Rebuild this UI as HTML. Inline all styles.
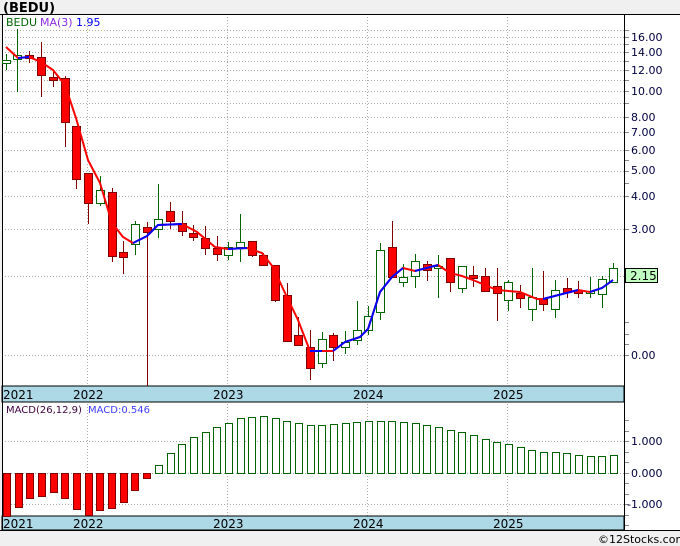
<!DOCTYPE html>
<html><head><meta charset="utf-8"><style>
html,body{margin:0;padding:0;background:#f0f0f0;}
svg{display:block;font-family:"DejaVu Sans","Liberation Sans",sans-serif;}
</style></head><body>
<svg width="680" height="546" viewBox="0 0 680 546" xmlns="http://www.w3.org/2000/svg">
<rect x="0" y="0" width="680" height="546" fill="#f0f0f0"/>
<rect x="2" y="14" width="678" height="516" fill="#fff"/>
<text x="3" y="12" font-size="13" font-weight="bold" fill="#000">(BEDU)</text>
<g stroke="#aaa" stroke-dasharray="1,2" stroke-width="1">
<line x1="2" x2="624" y1="30.5" y2="30.5"/><line x1="2" x2="624" y1="37.5" y2="37.5"/><line x1="2" x2="624" y1="44.5" y2="44.5"/><line x1="2" x2="624" y1="52.5" y2="52.5"/><line x1="2" x2="624" y1="61.5" y2="61.5"/><line x1="2" x2="624" y1="70.5" y2="70.5"/><line x1="2" x2="624" y1="80.5" y2="80.5"/><line x1="2" x2="624" y1="91.5" y2="91.5"/><line x1="2" x2="624" y1="103.5" y2="103.5"/><line x1="2" x2="624" y1="117.5" y2="117.5"/><line x1="2" x2="624" y1="132.5" y2="132.5"/><line x1="2" x2="624" y1="150.5" y2="150.5"/><line x1="2" x2="624" y1="171.5" y2="171.5"/><line x1="2" x2="624" y1="196.5" y2="196.5"/><line x1="2" x2="624" y1="229.5" y2="229.5"/><line x1="2" x2="624" y1="276.5" y2="276.5"/><line x1="2" x2="624" y1="355.5" y2="355.5"/>
<line x1="2" x2="624" y1="441.5" y2="441.5"/><line x1="2" x2="624" y1="473.5" y2="473.5"/><line x1="2" x2="624" y1="504.5" y2="504.5"/>
<line x1="87.5" x2="87.5" y1="14" y2="516"/><line x1="227.5" x2="227.5" y1="14" y2="516"/><line x1="367.5" x2="367.5" y1="14" y2="516"/><line x1="507.5" x2="507.5" y1="14" y2="516"/>
</g>
<rect x="2" y="386" width="622" height="16" fill="#add8e6" stroke="#000"/>
<rect x="2" y="516" width="622" height="14" fill="#add8e6" stroke="#000"/>
<g font-size="12" fill="#000">
<text x="3" y="399">2021</text><text x="73" y="399">2022</text><text x="213" y="399">2023</text><text x="353" y="399">2024</text><text x="493" y="399">2025</text>
<text x="3" y="528">2021</text><text x="73" y="528">2022</text><text x="213" y="528">2023</text><text x="353" y="528">2024</text><text x="493" y="528">2025</text>
</g>
<line x1="2.5" y1="14" x2="2.5" y2="530" stroke="#000"/>
<line x1="0" y1="14.5" x2="680" y2="14.5" stroke="#000"/>
<line x1="624.5" y1="14" x2="624.5" y2="530" stroke="#000"/>
<line x1="0" y1="530.5" x2="680" y2="530.5" stroke="#000"/>
<text x="6" y="26" font-size="11" fill="#006400">BEDU</text>
<text x="40" y="26" font-size="11" fill="#8a2be2">MA(3)</text>
<text x="76" y="26" font-size="11" fill="#0000ff">1.95</text>
<text x="6" y="413" font-size="10" fill="#400040">MACD(26,12,9)</text>
<text x="88" y="413" font-size="10" fill="#4040ff">MACD:0.546</text>
<g stroke="#888"><line x1="625" x2="629" y1="30.5" y2="30.5"/><line x1="625" x2="629" y1="37.5" y2="37.5"/><line x1="625" x2="629" y1="44.5" y2="44.5"/><line x1="625" x2="629" y1="52.5" y2="52.5"/><line x1="625" x2="629" y1="61.5" y2="61.5"/><line x1="625" x2="629" y1="70.5" y2="70.5"/><line x1="625" x2="629" y1="80.5" y2="80.5"/><line x1="625" x2="629" y1="91.5" y2="91.5"/><line x1="625" x2="629" y1="103.5" y2="103.5"/><line x1="625" x2="629" y1="117.5" y2="117.5"/><line x1="625" x2="629" y1="132.5" y2="132.5"/><line x1="625" x2="629" y1="150.5" y2="150.5"/><line x1="625" x2="629" y1="160.5" y2="160.5"/><line x1="625" x2="629" y1="171.5" y2="171.5"/><line x1="625" x2="629" y1="183.5" y2="183.5"/><line x1="625" x2="629" y1="196.5" y2="196.5"/><line x1="625" x2="629" y1="229.5" y2="229.5"/><line x1="625" x2="629" y1="322.5" y2="322.5"/><line x1="625" x2="629" y1="334.5" y2="334.5"/><line x1="625" x2="629" y1="344.5" y2="344.5"/><line x1="625" x2="629" y1="355.5" y2="355.5"/>
<line x1="625" x2="629" y1="420.5" y2="420.5"/><line x1="625" x2="629" y1="431.5" y2="431.5"/><line x1="625" x2="629" y1="441.5" y2="441.5"/><line x1="625" x2="629" y1="452.5" y2="452.5"/><line x1="625" x2="629" y1="462.5" y2="462.5"/><line x1="625" x2="629" y1="473.5" y2="473.5"/><line x1="625" x2="629" y1="483.5" y2="483.5"/><line x1="625" x2="629" y1="494.5" y2="494.5"/><line x1="625" x2="629" y1="504.5" y2="504.5"/><line x1="625" x2="629" y1="515.5" y2="515.5"/><line x1="625" x2="629" y1="525.5" y2="525.5"/></g>
<g font-size="11" fill="#000040">
<text x="631" y="41">16.00</text><text x="631" y="56">14.00</text><text x="631" y="74">12.00</text><text x="631" y="95">10.00</text><text x="631" y="121">8.00</text><text x="631" y="136">7.00</text><text x="631" y="154">6.00</text><text x="631" y="174">5.00</text><text x="631" y="200">4.00</text><text x="631" y="233">3.00</text><text x="631" y="359">0.00</text>
<text x="631" y="445">1.000</text><text x="631" y="477">0.000</text><text x="627" y="508">-1.000</text>
</g>
<rect x="625.5" y="268.5" width="32" height="14" fill="#c0ffc0" stroke="#000"/>
<text x="630" y="280" font-size="12" fill="#000">2.15</text>
<text x="598" y="543" font-size="11" fill="#000">©12Stocks.com</text>

<!-- wicks -->
<path fill="none" stroke="#006400" d="M6.5 54V70M17.5 29V92M100.5 176V206M135.5 221V255M158.5 184V238M228.5 242V260M240.5 214V262M322.5 332V368M345.5 331V354M357.5 301V345M368.5 306V335M380.5 243V320M403.5 264V287M415.5 254V288M438.5 255V298M462.5 266V293M508.5 280V311M532.5 268V321M555.5 280V318M590.5 277V298M602.5 276V308M613.5 263V282"/>
<path fill="none" stroke="#800000" d="M29.5 51V63M41.5 42V97M53.5 72V87M65.5 76V147M76.5 126V189M88.5 173V224M112.5 188V262M123.5 241V274M147.5 222V386M170.5 202V229M182.5 211V236M193.5 225V241M205.5 226V255M217.5 236V261M252.5 241V257M263.5 253V266M275.5 265V302M287.5 283V341M298.5 317V346M310.5 330V380M333.5 333V361M392.5 221V277M427.5 261V281M450.5 258V292M473.5 266V287M485.5 268V291M497.5 268V321M520.5 285V308M543.5 271V311M567.5 278V298M578.5 281V298"/>
<!-- green bodies -->
<g fill="#fff" stroke="#006400">
<rect x="2.5" y="60.5" width="8" height="3"/><rect x="13.5" y="55.5" width="8" height="4"/><rect x="96.5" y="190.5" width="8" height="13"/><rect x="131.5" y="224.5" width="8" height="20"/><rect x="154.5" y="219.5" width="8" height="10"/><rect x="224.5" y="247.5" width="8" height="8"/><rect x="236.5" y="242.5" width="8" height="5"/><rect x="318.5" y="339.5" width="8" height="24"/><rect x="341.5" y="342.5" width="8" height="5"/><rect x="353.5" y="330.5" width="8" height="10"/><rect x="364.5" y="316.5" width="8" height="14"/><rect x="376.5" y="250.5" width="8" height="62"/><rect x="399.5" y="277.5" width="8" height="5"/><rect x="411.5" y="261.5" width="8" height="15"/><rect x="434.5" y="266.5" width="8" height="2"/><rect x="458.5" y="266.5" width="8" height="22"/><rect x="504.5" y="282.5" width="8" height="18"/><rect x="528.5" y="297.5" width="8" height="12"/><rect x="551.5" y="290.5" width="8" height="19"/><rect x="586.5" y="291.5" width="8" height="2"/><rect x="598.5" y="279.5" width="8" height="15"/><rect x="609.5" y="268.5" width="8" height="14"/>
</g>
<!-- red bodies -->
<g fill="#ff0000" stroke="#800000">
<rect x="25.5" y="55.5" width="8" height="3"/><rect x="37.5" y="57.5" width="8" height="18"/><rect x="49.5" y="77.5" width="8" height="3"/><rect x="61.5" y="78.5" width="8" height="44"/><rect x="72.5" y="126.5" width="8" height="53"/><rect x="84.5" y="173.5" width="8" height="30"/><rect x="108.5" y="192.5" width="8" height="64"/><rect x="119.5" y="252.5" width="8" height="5"/><rect x="143.5" y="227.5" width="8" height="5"/><rect x="166.5" y="211.5" width="8" height="10"/><rect x="178.5" y="223.5" width="8" height="8"/><rect x="189.5" y="233.5" width="8" height="4"/><rect x="201.5" y="238.5" width="8" height="10"/><rect x="213.5" y="248.5" width="8" height="6"/><rect x="248.5" y="241.5" width="8" height="14"/><rect x="259.5" y="255.5" width="8" height="10"/><rect x="271.5" y="265.5" width="8" height="35"/><rect x="283.5" y="295.5" width="8" height="46"/><rect x="294.5" y="335.5" width="8" height="10"/><rect x="306.5" y="347.5" width="8" height="21"/><rect x="329.5" y="335.5" width="8" height="12"/><rect x="388.5" y="247.5" width="8" height="30"/><rect x="423.5" y="264.5" width="8" height="6"/><rect x="446.5" y="258.5" width="8" height="24"/><rect x="469.5" y="275.5" width="8" height="3"/><rect x="481.5" y="276.5" width="8" height="15"/><rect x="493.5" y="286.5" width="8" height="7"/><rect x="516.5" y="293.5" width="8" height="5"/><rect x="539.5" y="299.5" width="8" height="5"/><rect x="563.5" y="288.5" width="8" height="4"/><rect x="574.5" y="290.5" width="8" height="3"/>
</g>
<polyline fill="none" stroke="#ff0000" stroke-width="2" points="6,47 18,58 29,57 41,62 53,70 65,85 76,118 88,160 100,183 112,223 123,237 133,243 147,236 158,225 182,224 197,232 215,247 228,249 247,248 262,253 273,267 285,293 298,320 310,351 322,351 333,351 345,342 360,337 368,329 380,292 392,277 403,268 415,271 438,265 450,273 462,276 473,280 497,290 520,292 537,299 543,299 578,290 590,292 602,288 613,280"/>
<g fill="none" stroke="#0000ff" stroke-width="2">
<polyline points="18,58 29,57"/>
<polyline points="133,243 147,236 158,225 182,224"/>
<polyline points="228,249 247,248"/>
<polyline points="310,351 322,351"/>
<polyline points="333,351 345,342 360,337 368,329 380,292 392,277 403,268"/>
<polyline points="415,271 438,265"/>
<polyline points="543,299 578,290"/>
<polyline points="590,292 602,288 613,280"/>
</g>
<!-- MACD -->
<g fill="#ff0000" stroke="#800000">
<rect x="3.5" y="473.5" width="7" height="43"/><rect x="15.5" y="473.5" width="7" height="34"/><rect x="26.5" y="473.5" width="7" height="25"/><rect x="38.5" y="473.5" width="7" height="23"/><rect x="50.5" y="473.5" width="7" height="19"/><rect x="61.5" y="473.5" width="7" height="25"/><rect x="73.5" y="473.5" width="7" height="36"/><rect x="85.5" y="473.5" width="7" height="42"/><rect x="96.5" y="473.5" width="7" height="37"/><rect x="108.5" y="473.5" width="7" height="35"/><rect x="120.5" y="473.5" width="7" height="29"/><rect x="131.5" y="473.5" width="7" height="17"/><rect x="143.5" y="473.5" width="7" height="5"/>
</g>
<g fill="#fff" stroke="#006400">
<rect x="155.5" y="465.5" width="7" height="8"/><rect x="167.5" y="453.5" width="7" height="20"/><rect x="178.5" y="444.5" width="7" height="29"/><rect x="190.5" y="437.5" width="7" height="36"/><rect x="202.5" y="432.5" width="7" height="41"/><rect x="213.5" y="427.5" width="7" height="46"/><rect x="225.5" y="423.5" width="7" height="50"/><rect x="237.5" y="418.5" width="7" height="55"/><rect x="248.5" y="417.5" width="7" height="56"/><rect x="260.5" y="416.5" width="7" height="57"/><rect x="272.5" y="418.5" width="7" height="55"/><rect x="283.5" y="421.5" width="7" height="52"/><rect x="295.5" y="423.5" width="7" height="50"/><rect x="307.5" y="425.5" width="7" height="48"/><rect x="318.5" y="425.5" width="7" height="48"/><rect x="330.5" y="424.5" width="7" height="49"/><rect x="342.5" y="423.5" width="7" height="50"/><rect x="353.5" y="422.5" width="7" height="51"/><rect x="365.5" y="421.5" width="7" height="52"/><rect x="377.5" y="421.5" width="7" height="52"/><rect x="388.5" y="421.5" width="7" height="52"/><rect x="400.5" y="422.5" width="7" height="51"/><rect x="412.5" y="423.5" width="7" height="50"/><rect x="423.5" y="425.5" width="7" height="48"/><rect x="435.5" y="427.5" width="7" height="46"/><rect x="447.5" y="430.5" width="7" height="43"/><rect x="458.5" y="432.5" width="7" height="41"/><rect x="470.5" y="435.5" width="7" height="38"/><rect x="482.5" y="439.5" width="7" height="34"/><rect x="493.5" y="442.5" width="7" height="31"/><rect x="505.5" y="444.5" width="7" height="29"/><rect x="517.5" y="447.5" width="7" height="26"/><rect x="528.5" y="450.5" width="7" height="23"/><rect x="540.5" y="452.5" width="7" height="21"/><rect x="552.5" y="452.5" width="7" height="21"/><rect x="563.5" y="453.5" width="7" height="20"/><rect x="575.5" y="455.5" width="7" height="18"/><rect x="587.5" y="456.5" width="7" height="17"/><rect x="598.5" y="456.5" width="7" height="17"/><rect x="610.5" y="455.5" width="7" height="18"/>
</g>
</svg>
</body></html>
